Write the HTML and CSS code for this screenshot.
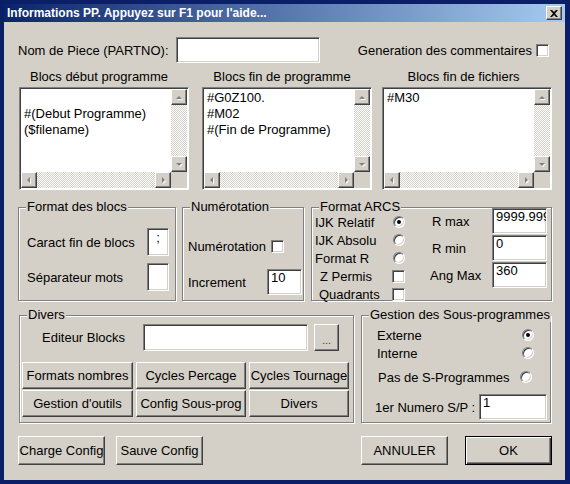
FILE: index.html
```html
<!DOCTYPE html>
<html lang="fr">
<head>
<meta charset="utf-8">
<title>Informations PP</title>
<link rel="stylesheet" href="styles.css">
</head>
<body>
<div class="Window">
    <div class="TitleBar">
        <span class="Title">Informations PP. Appuyez sur F1 pour l'aide...</span>
        <span class="CloseBox Raised">
            <svg width="8" height="7" viewBox="0 0 8 7"><path d="M0 0h2l2 2 2-2h2L5 3.5 8 7H6L4 5 2 7H0l3-3.5z" fill="#000"/></svg>
        </span>
    </div>

    <div class="Client">
        <div class="NameRow">
            <span class="NameLabel">Nom de Piece (PARTNO):</span>
            <div class="Edit NameEdit"></div>
            <span class="Comments">Generation des commentaires</span>
            <span class="Check CommentsCheck"></span>
        </div>

        <div class="Lists">
            <div class="ListCol">
                <div class="ListTitle">Blocs début programme</div>
                <div class="ListBox">
                    <div class="ListText">
                        <div class="Line">&nbsp;</div>
                        <div class="Line">#(Debut Programme)</div>
                        <div class="Line">($filename)</div>
                    </div>
                    <div class="VScroll">
                        <span class="Arrow Raised"><svg width="14" height="14"><polygon points="4,9 10,9 7,6" fill="#fff" transform="translate(1 1)"/><polygon points="4,9 10,9 7,6" fill="#808080"/></svg></span>
                        <span class="Track"></span>
                        <span class="Arrow Raised"><svg width="14" height="14"><polygon points="4,6 10,6 7,9" fill="#fff" transform="translate(1 1)"/><polygon points="4,6 10,6 7,9" fill="#808080"/></svg></span>
                    </div>
                    <div class="HScroll">
                        <span class="Arrow Raised"><svg width="14" height="14"><polygon points="8,4 8,10 5,7" fill="#fff" transform="translate(1 1)"/><polygon points="8,4 8,10 5,7" fill="#808080"/></svg></span>
                        <span class="Track"></span>
                        <span class="Arrow Raised"><svg width="14" height="14"><polygon points="6,4 6,10 9,7" fill="#fff" transform="translate(1 1)"/><polygon points="6,4 6,10 9,7" fill="#808080"/></svg></span>
                    </div>
                    <div class="Corner"></div>
                </div>
            </div>
            <div class="ListCol">
                <div class="ListTitle">Blocs fin de programme</div>
                <div class="ListBox">
                    <div class="ListText">
                        <div class="Line">#G0Z100.</div>
                        <div class="Line">#M02</div>
                        <div class="Line">#(Fin de Programme)</div>
                    </div>
                    <div class="VScroll">
                        <span class="Arrow Raised"><svg width="14" height="14"><polygon points="4,9 10,9 7,6" fill="#fff" transform="translate(1 1)"/><polygon points="4,9 10,9 7,6" fill="#808080"/></svg></span>
                        <span class="Track"></span>
                        <span class="Arrow Raised"><svg width="14" height="14"><polygon points="4,6 10,6 7,9" fill="#fff" transform="translate(1 1)"/><polygon points="4,6 10,6 7,9" fill="#808080"/></svg></span>
                    </div>
                    <div class="HScroll">
                        <span class="Arrow Raised"><svg width="14" height="14"><polygon points="8,4 8,10 5,7" fill="#fff" transform="translate(1 1)"/><polygon points="8,4 8,10 5,7" fill="#808080"/></svg></span>
                        <span class="Track"></span>
                        <span class="Arrow Raised"><svg width="14" height="14"><polygon points="6,4 6,10 9,7" fill="#fff" transform="translate(1 1)"/><polygon points="6,4 6,10 9,7" fill="#808080"/></svg></span>
                    </div>
                    <div class="Corner"></div>
                </div>
            </div>
            <div class="ListCol">
                <div class="ListTitle">Blocs fin de fichiers</div>
                <div class="ListBox">
                    <div class="ListText">
                        <div class="Line">#M30</div>
                    </div>
                    <div class="VScroll">
                        <span class="Arrow Raised"><svg width="14" height="14"><polygon points="4,9 10,9 7,6" fill="#fff" transform="translate(1 1)"/><polygon points="4,9 10,9 7,6" fill="#808080"/></svg></span>
                        <span class="Track"></span>
                        <span class="Arrow Raised"><svg width="14" height="14"><polygon points="4,6 10,6 7,9" fill="#fff" transform="translate(1 1)"/><polygon points="4,6 10,6 7,9" fill="#808080"/></svg></span>
                    </div>
                    <div class="HScroll">
                        <span class="Arrow Raised"><svg width="14" height="14"><polygon points="8,4 8,10 5,7" fill="#fff" transform="translate(1 1)"/><polygon points="8,4 8,10 5,7" fill="#808080"/></svg></span>
                        <span class="Track"></span>
                        <span class="Arrow Raised"><svg width="14" height="14"><polygon points="6,4 6,10 9,7" fill="#fff" transform="translate(1 1)"/><polygon points="6,4 6,10 9,7" fill="#808080"/></svg></span>
                    </div>
                    <div class="Corner"></div>
                </div>
            </div>
        </div>

        <div class="GroupsTop">
            <div class="Group BlocsGroup">
                <span class="GroupTitle">Format des blocs</span>
                <span class="BlocsLabel">Caract fin de blocs</span>
                <div class="Edit SmallEdit">;</div>
                <span class="BlocsLabel">Séparateur mots</span>
                <div class="Edit SmallEdit"></div>
            </div>

            <div class="Group NumGroup">
                <span class="GroupTitle">Numérotation</span>
                <div class="NumRow">
                    <span class="NumLabel">Numérotation</span>
                    <span class="Check"></span>
                </div>
                <div class="IncRow">
                    <span class="IncLabel">Increment</span>
                    <div class="Edit IncEdit">10</div>
                </div>
            </div>

            <div class="Group ArcsGroup">
                <span class="GroupTitle">Format ARCS</span>
                <div class="ArcsModes">
                    <span>IJK Relatif</span><span class="Radio On"></span>
                    <span>IJK Absolu</span><span class="Radio"></span>
                    <span>Format R</span><span class="Radio"></span>
                    <span class="Indent5">Z Permis</span><span class="Check Shifted"></span>
                    <span class="Indent4">Quadrants</span><span class="Check Shifted"></span>
                </div>
                <div class="ArcsValues">
                    <span class="Indent2">R max</span><div class="Edit ArcEdit">9999.999</div>
                    <span class="Indent2">R min</span><div class="Edit ArcEdit">0</div>
                    <span>Ang Max</span><div class="Edit ArcEdit">360</div>
                </div>
            </div>
        </div>

        <div class="GroupsBottom">
            <div class="Group DiversGroup">
                <span class="GroupTitle">Divers</span>
                <div class="EditorRow">
                    <span class="EditorLabel">Editeur Blocks</span>
                    <div class="Edit EditorEdit"></div>
                    <span class="Button Raised Browse">...</span>
                </div>
                <div class="ToolButtons">
                    <span class="Button Raised">Formats nombres</span>
                    <span class="Button Raised">Cycles Percage</span>
                    <span class="Button Raised">Cycles Tournage</span>
                    <span class="Button Raised">Gestion d'outils</span>
                    <span class="Button Raised">Config Sous-prog</span>
                    <span class="Button Raised">Divers</span>
                </div>
            </div>

            <div class="Group SubGroup">
                <span class="GroupTitle">Gestion des Sous-programmes</span>
                <div class="SubRow">
                    <span class="SubLabel">Externe</span><span class="Radio On"></span>
                </div>
                <div class="SubRow">
                    <span class="SubLabel">Interne</span><span class="Radio"></span>
                </div>
                <div class="SubRow NoSubRow">
                    <span class="SubLabel">Pas de S-Programmes</span><span class="Radio"></span>
                </div>
                <div class="SubRow FirstNumRow">
                    <span class="SubLabel">1er Numero S/P :</span><div class="Edit FirstNumEdit">1</div>
                </div>
            </div>
        </div>

        <div class="Footer">
            <span class="Button Raised FooterButton">Charge Config</span>
            <span class="Button Raised FooterButton">Sauve Config</span>
            <span class="Button Raised FooterButton Cancel">ANNULER</span>
            <span class="Button Default FooterButton">OK</span>
        </div>
    </div>
</div>
</body>
</html>
```

FILE: styles.css
```css
body {
    margin: 0px;
    background-color: #0a1f68;
    font: 13px "Liberation Sans", Arial, sans-serif;
    color: #000;
}

.Window {
    margin: 4px 5px 4px 4px;
    height: 476px;
    background-color: #d4d0c8;
    display: flex;
    flex-direction: column;
}

.TitleBar {
    height: 18px;
    display: flex;
    align-items: center;
    padding: 0px 3px 0px 3px;
    background: linear-gradient(to right, #0a246a, #a6caf0);
}

.Title {
    flex: 1;
    color: #fff;
    font: bold 12px "Liberation Sans", Arial, sans-serif;
}

.CloseBox {
    width: 16px;
    height: 14px;
    box-sizing: border-box;
    display: flex;
    align-items: center;
    justify-content: center;
}

/* classic 3D edges */
.Raised {
    background-color: #d4d0c8;
    border: 1px solid;
    border-color: #fff #404040 #404040 #fff;
    box-shadow: inset -1px -1px #808080, inset 1px 1px #d4d0c8;
}

.Edit, .Check, .ListBox {
    box-sizing: border-box;
    background-color: #fff;
    border: 1px solid;
    border-color: #808080 #fff #fff #808080;
    box-shadow: inset 1px 1px #404040, inset -1px -1px #d4d0c8;
}

.Edit {
    padding: 1px 3px;
    line-height: 16px;
    white-space: nowrap;
    overflow: hidden;
}

.Check {
    display: inline-block;
    width: 13px;
    height: 13px;
}

.Radio {
    display: inline-block;
    position: relative;
    width: 12px;
    height: 12px;
    box-sizing: border-box;
    border-radius: 50%;
    background-color: #fff;
    border: 1px solid;
    border-color: #808080 #fff #fff #808080;
    box-shadow: inset 1px 1px #404040, inset -1px -1px #d4d0c8;
}

.Radio.On::after {
    content: "";
    position: absolute;
    left: 3px;
    top: 3px;
    width: 4px;
    height: 4px;
    border-radius: 50%;
    background-color: #000;
}

.Client {
    flex: 1;
    padding: 15px 13px 0px 14px;
}

.NameRow {
    display: flex;
    align-items: center;
    height: 26px;
}

.NameLabel {
    width: 158px;
}

.NameEdit {
    width: 144px;
    height: 26px;
}

.Comments {
    margin-left: auto;
}

.CommentsCheck {
    margin: 1px 3px 0px 4px;
}

.Lists {
    display: grid;
    grid-template-columns: 170px 170px 170px;
    column-gap: 13px;
    margin: 6px 0px 0px 1px;
}

.Lists .ListCol:last-child {
    margin-left: -3px;
}

.ListTitle {
    line-height: 16px;
    text-align: center;
    padding-right: 10px;
    margin-bottom: 2px;
}

.ListBox {
    width: 170px;
    height: 103px;
    padding: 1px;
    display: grid;
    grid-template-columns: 150px 16px;
    grid-template-rows: 83px 16px;
    box-shadow: inset 1px 1px #404040;
}

.ListText {
    padding: 1px 3px;
    line-height: 16px;
    white-space: nowrap;
    overflow: hidden;
}

.VScroll {
    display: flex;
    flex-direction: column;
}

.HScroll {
    display: flex;
}

.Arrow {
    width: 16px;
    height: 16px;
    box-sizing: border-box;
    flex: none;
    display: flex;
}

.Track {
    flex: 1;
    background: repeating-conic-gradient(#fff 0 25%, #d4d0c8 0 50%) 0 0 / 2px 2px;
}

.Corner {
    background-color: #d4d0c8;
}

/* etched group frames */
.Group {
    position: relative;
    box-sizing: border-box;
    border: 1px solid #808080;
    box-shadow: inset 1px 1px #fff, 1px 1px #fff;
}

.GroupTitle {
    position: absolute;
    top: -8px;
    left: 7px;
    padding: 0px 1px;
    line-height: 14px;
    background-color: #d4d0c8;
    white-space: nowrap;
}

.GroupsTop {
    display: flex;
    margin-top: 17px;
    height: 94px;
}

.BlocsGroup {
    width: 158px;
    display: grid;
    grid-template-columns: 120px 22px;
    grid-auto-rows: 28px;
    row-gap: 7px;
    align-items: center;
    align-content: start;
    padding: 20px 0px 0px 8px;
}

.SmallEdit {
    height: 28px;
    text-align: center;
    padding: 1px 0px;
}

.NumGroup {
    width: 122px;
    margin-left: 6px;
    padding: 30px 0px 0px 5px;
}

.NumRow {
    display: flex;
    align-items: center;
    height: 16px;
}

.NumLabel {
    width: 83px;
}

.IncRow {
    display: flex;
    align-items: center;
    margin-top: 15px;
}

.IncLabel {
    width: 79px;
}

.IncEdit {
    width: 35px;
    height: 26px;
    padding: 0px 3px;
}

.ArcsGroup {
    width: 241px;
    margin-left: 7px;
    display: flex;
    align-items: flex-start;
}

.ArcsModes {
    display: grid;
    grid-template-columns: 78px 14px;
    grid-auto-rows: 18px;
    align-items: center;
    padding: 5px 0px 0px 3px;
}

.Indent5 {
    padding-left: 5px;
}

.Indent4 {
    padding-left: 4px;
}

.Indent2 {
    padding-left: 2px;
}

.Check.Shifted {
    margin-left: -1px;
}

.ArcsValues {
    display: grid;
    grid-template-columns: 62px 55px;
    grid-auto-rows: 26px;
    row-gap: 1px;
    align-items: center;
    margin-left: 23px;
}

.ArcEdit {
    height: 26px;
    padding: 0px 3px;
}

.GroupsBottom {
    display: flex;
    margin: 14px 0px 0px 1px;
    height: 108px;
}

.DiversGroup {
    width: 335px;
    padding: 8px 0px 0px 2px;
}

.EditorRow {
    display: flex;
    align-items: center;
}

.EditorLabel {
    width: 101px;
    margin-left: 20px;
}

.EditorEdit {
    width: 165px;
    height: 27px;
}

.Button {
    box-sizing: border-box;
    display: flex;
    align-items: center;
    justify-content: center;
    white-space: nowrap;
}

.Browse {
    width: 25px;
    height: 27px;
    margin-left: 6px;
    font-size: 11px;
    padding-top: 4px;
    color: #404040;
}

.ToolButtons {
    display: grid;
    grid-template-columns: 111px 110px 100px;
    grid-auto-rows: 27px;
    column-gap: 3px;
    row-gap: 1px;
    margin-top: 11px;
}

.SubGroup {
    width: 190px;
    margin-left: 7px;
    padding: 10px 0px 0px 0px;
}

.SubRow {
    display: flex;
    align-items: center;
    height: 18px;
    padding-left: 15px;
}

.SubRow .SubLabel {
    width: 145px;
}

.NoSubRow {
    margin-top: 6px;
    padding-left: 16px;
}

.NoSubRow .SubLabel {
    width: 142px;
}

.FirstNumRow {
    margin-top: 8px;
    height: 26px;
    padding-left: 13px;
}

.FirstNumRow .SubLabel {
    width: 104px;
}

.FirstNumEdit {
    width: 68px;
    height: 26px;
    padding: 0px 3px;
}

.Footer {
    display: flex;
    margin-top: 13px;
}

.FooterButton {
    width: 87px;
    height: 29px;
    margin-right: 11px;
}

.Cancel {
    margin-left: auto;
    margin-right: 17px;
}

.Default {
    margin-right: 0px;
    background-color: #d4d0c8;
    border: 1px solid #000;
    box-shadow: inset 1px 1px #fff, inset -1px -1px #404040, inset -2px -2px #808080;
}
```
